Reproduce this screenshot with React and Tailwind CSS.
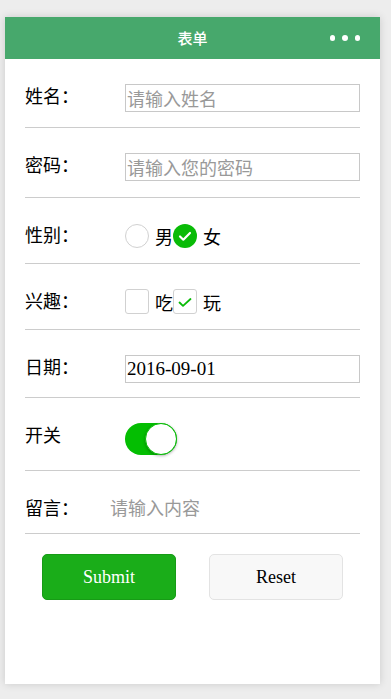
import React from "react";

const cjk = { fontFamily: '"Noto Sans CJK SC", "Noto Sans", sans-serif' };
const serif = { fontFamily: '"Liberation Serif", "Noto Sans CJK SC", serif' };

function Label({ children }) {
  return (
    <div className="w-[100px] shrink-0 text-[18px] leading-[22px] text-black" style={cjk}>
      {children}
    </div>
  );
}

function Row({ h, children }) {
  return (
    <div className={`flex items-start pt-[25px] border-b border-[#cccccc] ${h}`}>{children}</div>
  );
}

export default function App() {
  return (
    <div className="min-h-[699px] bg-[#ededed] pt-[17px] pl-[5px]">
      <div className="w-[375px] h-[667px] bg-white shadow-[0_0_8px_rgba(0,0,0,0.15)]">
        <div className="relative h-[42px] bg-[#47a86c] flex items-center justify-center">
          <span className="text-white text-[15px] font-medium" style={cjk}>表单</span>
          <div className="absolute right-[20px] top-[18px] flex gap-[7px]">
            <span className="w-[5.5px] h-[5.5px] rounded-full bg-white" />
            <span className="w-[5.5px] h-[5.5px] rounded-full bg-white" />
            <span className="w-[5.5px] h-[5.5px] rounded-full bg-white" />
          </div>
        </div>
        <div className="px-5">
          <Row h="h-[69px]">
            <Label>姓名：</Label>
            <input
              className="w-[235px] min-w-0 h-[28px] border border-[#c8c8c8] px-[1px] text-[18px] outline-none placeholder:text-[#999999]"
              style={cjk}
              placeholder="请输入姓名"
            />
          </Row>
          <Row h="h-[70px]">
            <Label>密码：</Label>
            <input
              className="w-[235px] min-w-0 h-[28px] border border-[#c8c8c8] px-[1px] text-[18px] outline-none placeholder:text-[#999999]"
              style={cjk}
              placeholder="请输入您的密码"
            />
          </Row>
          <Row h="h-[66px]">
            <Label>性别：</Label>
            <div className="flex items-center pt-[1px] text-[18px] leading-[22px] text-black" style={cjk}>
              <span className="w-[24px] h-[24px] rounded-full border border-[#d1d1d1] mr-[6px]" />
              <span>男</span>
              <span className="w-[24px] h-[24px] rounded-full bg-[#09bb07] mr-[6px] flex items-center justify-center">
                <svg width="24" height="24" viewBox="0 0 24 24">
                  <path d="M7 12.5l3.3 3.2L17 9" fill="none" stroke="white" strokeWidth="2.2" strokeLinecap="round" strokeLinejoin="round" />
                </svg>
              </span>
              <span>女</span>
            </div>
          </Row>
          <Row h="h-[66px]">
            <Label>兴趣：</Label>
            <div className="flex items-center text-[18px] leading-[22px] text-black" style={cjk}>
              <span className="w-[24px] h-[25px] rounded-[3px] border border-[#d1d1d1] mr-[6px]" />
              <span>吃</span>
              <span className="w-[24px] h-[25px] rounded-[3px] border border-[#d1d1d1] mr-[6px] flex items-center justify-center">
                <svg width="22" height="22" viewBox="0 0 22 22">
                  <path d="M5.5 11.5l3.5 3.3L16.5 8" fill="none" stroke="#09bb07" strokeWidth="1.8" strokeLinecap="round" strokeLinejoin="round" />
                </svg>
              </span>
              <span>玩</span>
            </div>
          </Row>
          <Row h="h-[68px]">
            <Label>日期：</Label>
            <input
              className="w-[235px] min-w-0 h-[28px] border border-[#c8c8c8] px-[1px] text-[19px] text-black outline-none"
              style={serif}
              defaultValue="2016-09-01"
            />
          </Row>
          <Row h="h-[73px]">
            <Label>开关</Label>
            <div className="relative w-[52px] h-[32px] rounded-full bg-[#04be02]">
              <span className="absolute right-0 top-0 w-[32px] h-[32px] rounded-full bg-white border border-[#04be02] shadow-[0_1px_3px_rgba(0,0,0,0.3)]" />
            </div>
          </Row>
          <Row h="h-[63px]">
            <div className="w-[85px] shrink-0 text-[18px] leading-[22px] text-black" style={cjk}>留言：</div>
            <textarea
              rows={1}
              className="flex-1 h-[22px] resize-none overflow-hidden text-[18px] leading-[22px] outline-none placeholder:text-[#999999]"
              style={cjk}
              placeholder="请输入内容"
            />
          </Row>
          <div className="flex justify-center gap-[33px] mt-[20px]">
            <button
              className="w-[134px] h-[46px] rounded-[5px] bg-[#1aad19] border border-[#179b16] text-white text-[18px]"
              style={serif}
            >
              Submit
            </button>
            <button
              className="w-[134px] h-[46px] rounded-[5px] bg-[#f8f8f8] border border-[#e3e3e3] text-black text-[18px]"
              style={serif}
            >
              Reset
            </button>
          </div>
        </div>
      </div>
    </div>
  );
}
